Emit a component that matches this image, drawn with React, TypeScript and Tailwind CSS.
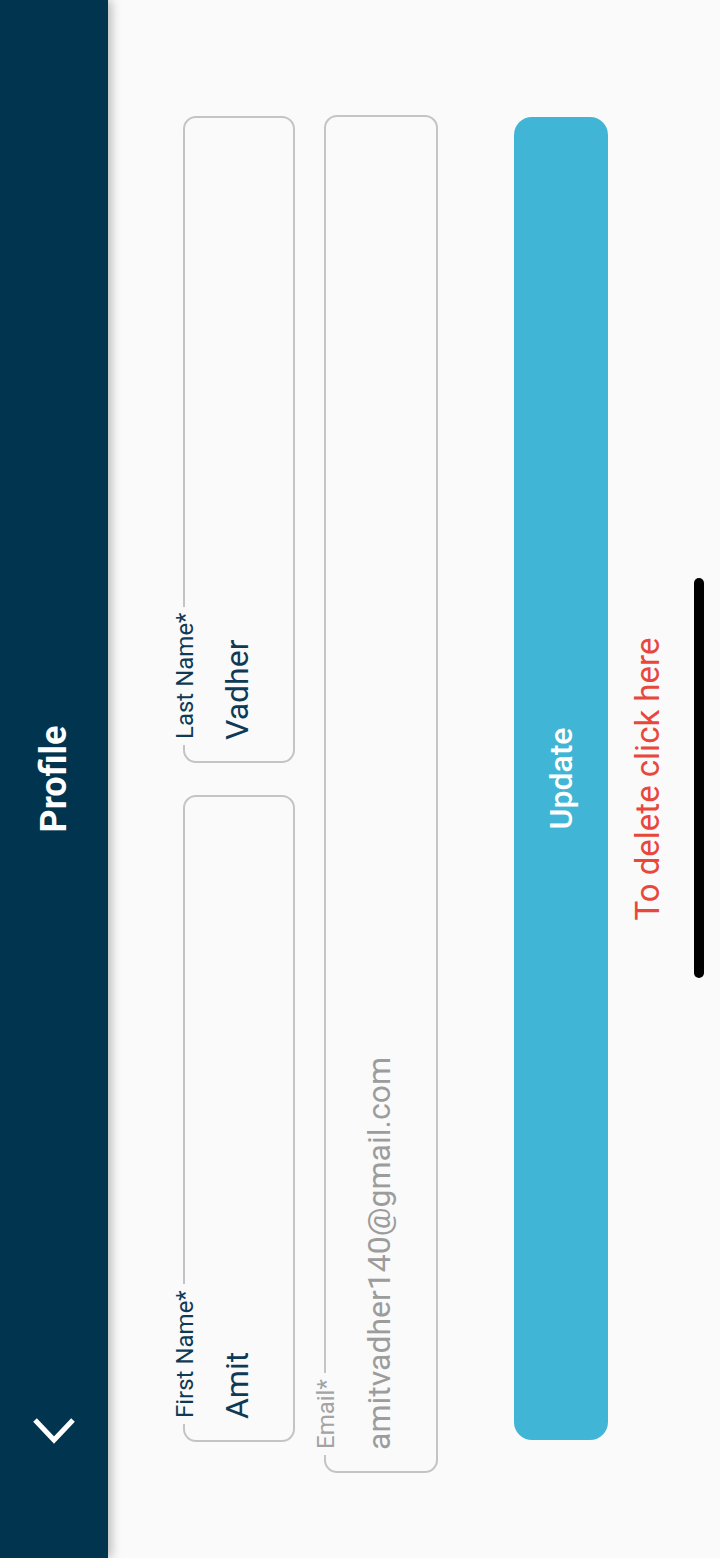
import React from 'react';

type FieldProps = {
  label: string;
  value: string;
  disabled?: boolean;
  className?: string;
};

const OutlinedField: React.FC<FieldProps> = ({ label, value, disabled, className }) => (
  <div
    className={`relative rounded-[13px] border-2 border-[#c4c4c4] flex items-center pb-[4px] ${className ?? ''}`}
  >
    <span
      className={`absolute -top-[12px] left-[16px] px-[6px] bg-[#fafafa] text-[24px] leading-[24px] ${
        disabled ? 'text-[#a3a3a3]' : 'text-[#0f3a56]'
      }`}
    >
      {label}
    </span>
    <span
      className={`pl-[21px] text-[32px] leading-[32px] ${disabled ? 'text-[#9c9c9c]' : 'text-[#0f3a56]'}`}
    >
      {value}
    </span>
  </div>
);

export default function App() {
  return (
    <div className="relative w-[720px] h-[1558px] overflow-hidden bg-[#fafafa] font-[Roboto,sans-serif]">
      {/* landscape screen, turned a quarter to the left */}
      <div className="absolute left-0 top-0 w-[1558px] h-[720px] origin-top-left -rotate-90 translate-y-[1558px] flex flex-col bg-[#fafafa]">
        <header className="relative z-10 h-[108px] shrink-0 bg-[#01344f] flex items-center justify-center shadow-[0_3px_10px_rgba(0,0,0,0.28)]">
          <svg
            className="absolute left-[108px] top-[29px]"
            width="34"
            height="50"
            viewBox="0 0 34 50"
            fill="none"
          >
            <path d="M30 6 L10 25 L30 44" stroke="white" strokeWidth="5" strokeLinecap="butt" strokeLinejoin="miter" />
          </svg>
          <h1 className="text-white text-[36px] leading-[40px] font-bold">Profile</h1>
        </header>

        <main className="flex flex-col pt-[75px]">
          <div className="flex gap-[32px] px-[116px]">
            <OutlinedField label="First Name*" value="Amit" className="flex-1 h-[112px]" />
            <OutlinedField label="Last Name*" value="Vadher" className="flex-1 h-[112px]" />
          </div>

          <OutlinedField
            label="Email*"
            value="amitvadher140@gmail.com"
            disabled
            className="mt-[29px] ml-[85px] w-[1358px] h-[114px]"
          />

          <button className="mt-[76px] ml-[118px] w-[1323px] h-[94px] rounded-[18px] bg-[#40b5d5] text-white text-[32px] leading-[32px] font-medium">
            Update
          </button>

          <p className="mt-[24px] text-center text-[#e8483c] text-[33px] leading-[32px]">To delete click here</p>
        </main>

        <div className="absolute left-[580px] top-[694px] w-[400px] h-[10px] rounded-full bg-black" />
      </div>
    </div>
  );
}
